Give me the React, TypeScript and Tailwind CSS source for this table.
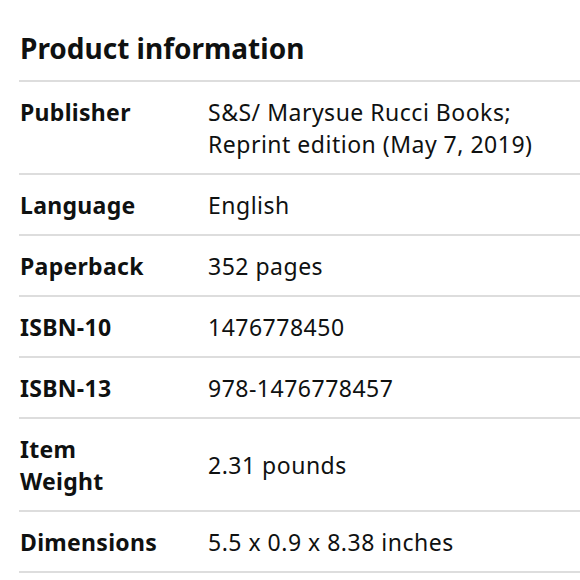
import React from "react";

const rows: { label: string[]; value: string[] }[] = [
  { label: ["Publisher"], value: ["S&S/ Marysue Rucci Books;", "Reprint edition (May 7, 2019)"] },
  { label: ["Language"], value: ["English"] },
  { label: ["Paperback"], value: ["352 pages"] },
  { label: ["ISBN-10"], value: ["1476778450"] },
  { label: ["ISBN-13"], value: ["978-1476778457"] },
  { label: ["Item", "Weight"], value: ["2.31 pounds"] },
  { label: ["Dimensions"], value: ["5.5 x 0.9 x 8.38 inches"] },
];

export default function App() {
  return (
    <div
      className="w-[580px] h-[580px] bg-white text-[#0f1111] pl-[19px] overflow-hidden"
      style={{ fontFamily: '"Noto Sans", sans-serif' }}
    >
      <h2 className="pt-[30px] pb-[14px] pl-[1px] text-[28px] leading-[36px] font-bold border-b-2 border-[#dddddd]">
        Product information
      </h2>
      {rows.map((r, i) => (
        <div
          key={i}
          className="grid grid-cols-[189px_1fr] py-[13.5px] border-b-2 border-[#dddddd] leading-[32px]"
        >
          <div className="self-start pl-[1px] font-bold text-[23px] tracking-[0.3px]">
            {r.label.map((l, j) => (
              <div key={j}>{l}</div>
            ))}
          </div>
          <div className="self-center text-[23px] tracking-[0.5px]">
            {r.value.map((v, j) => (
              <div key={j}>{v}</div>
            ))}
          </div>
        </div>
      ))}
    </div>
  );
}
